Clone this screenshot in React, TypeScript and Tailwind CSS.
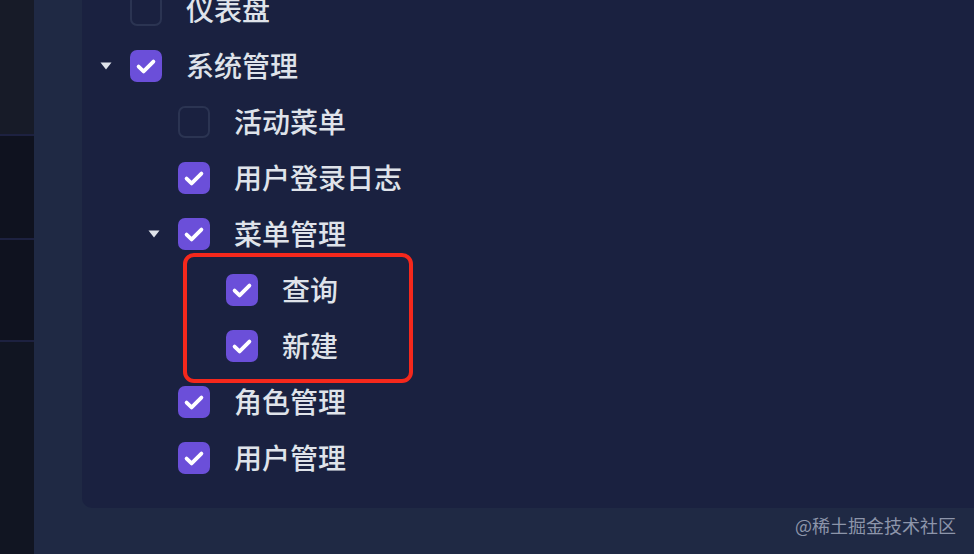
type Node = {
  label: string;
  level: number;
  checked: boolean;
  expanded?: boolean;
};

const nodes: Node[] = [
  { label: "仪表盘", level: 0, checked: false },
  { label: "系统管理", level: 0, checked: true, expanded: true },
  { label: "活动菜单", level: 1, checked: false },
  { label: "用户登录日志", level: 1, checked: true },
  { label: "菜单管理", level: 1, checked: true, expanded: true },
  { label: "查询", level: 2, checked: true },
  { label: "新建", level: 2, checked: true },
  { label: "角色管理", level: 1, checked: true },
  { label: "用户管理", level: 1, checked: true },
];

const indent = ["pl-0", "pl-[48px]", "pl-[96px]"];

function Checkbox({ checked }: { checked: boolean }) {
  if (!checked) {
    return <div className="h-8 w-8 shrink-0 rounded-[7px] border-2 border-[#2b3452] bg-[#1a2140]" />;
  }
  return (
    <div className="h-8 w-8 shrink-0 rounded-[7px] bg-[#6b4fd9]">
      <svg width="32" height="32" viewBox="0 0 32 32" fill="none">
        <path
          d="M8.6 16.6 L13.6 21.4 L23.4 11.6"
          stroke="white"
          strokeWidth="3.8"
          strokeLinecap="round"
          strokeLinejoin="round"
        />
      </svg>
    </div>
  );
}

function TreeRow({ node }: { node: Node }) {
  return (
    <div className={`flex h-14 items-center ${indent[node.level]}`}>
      <div className="flex w-8 shrink-0 items-center pl-[2px]">
        {node.expanded && (
          <svg width="12" height="8" viewBox="0 0 12 8">
            <path d="M0.5 0.5 L11.5 0.5 L6 7.5 Z" fill="#dfe3ea" />
          </svg>
        )}
      </div>
      <Checkbox checked={node.checked} />
      <span className="ml-6 -mt-[2px] text-[28px] font-medium leading-none text-[#dfe3ea]">{node.label}</span>
    </div>
  );
}

export default function App() {
  return (
    <div
      className="relative flex h-[554px] w-[974px] overflow-hidden bg-[#1f2944]"
      style={{ fontFamily: '"Noto Sans CJK SC", "Noto Sans", sans-serif' }}
    >
      <aside className="flex w-[34px] shrink-0 flex-col bg-[#0f1220]">
        <div className="h-[136px] border-b-2 border-[#1d2140] bg-[#171b28]" />
        <div className="h-[104px] border-b-2 border-[#1d2140] bg-[#0f121f]" />
        <div className="h-[102px] border-b-2 border-[#1d2140] bg-[#0f121f]" />
        <div className="flex-1 bg-[#111522]" />
      </aside>

      <main className="flex-1 pl-[48px]">
        <div className="-mt-[18px] h-[526px] rounded-bl-[10px] bg-[#1a2140] pl-4">
          {nodes.map((node) => (
            <TreeRow key={node.label} node={node} />
          ))}
        </div>
      </main>

      <div className="pointer-events-none absolute left-[183px] top-[253px] h-[130px] w-[230px] rounded-[11px] border-4 border-[#f5281c]" />

      <div className="absolute left-[795px] top-[512px] text-[18px] text-[#8d95aa]">@稀土掘金技术社区</div>
    </div>
  );
}
